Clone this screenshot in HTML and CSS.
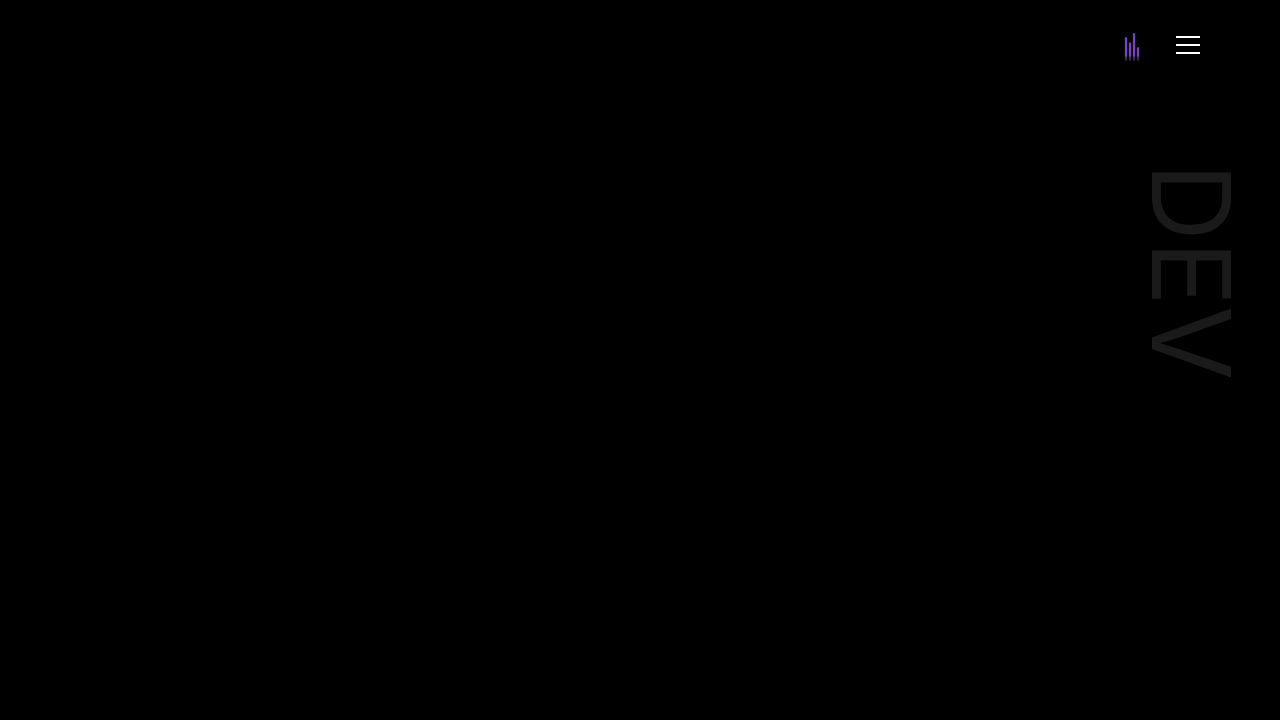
FILE: index.html
```html
<!DOCTYPE html>
<html lang="en">
<head>
<meta charset="utf-8">
<title>DEV</title>
<link rel="stylesheet" href="styles.css">
</head>
<body>
<div class="page">
  <header class="topbar">
    <svg class="equalizer" viewBox="0 0 16 28" width="16" height="28" aria-hidden="true">
      <defs>
        <linearGradient id="barfade" gradientUnits="userSpaceOnUse" x1="0" y1="0" x2="0" y2="28">
          <stop offset="0" stop-color="#7c3fd0"/>
          <stop offset="0.82" stop-color="#7c3fd0"/>
          <stop offset="0.86" stop-color="#3a3a44"/>
          <stop offset="1" stop-color="#26262c"/>
        </linearGradient>
      </defs>
      <rect x="0.9" y="4.3" width="2.2" height="23.4" fill="url(#barfade)"/>
      <rect x="4.9" y="9.6" width="2.2" height="18.1" fill="url(#barfade)"/>
      <rect x="8.9" y="0.3" width="2.2" height="27.4" fill="url(#barfade)"/>
      <rect x="12.9" y="14.3" width="2.2" height="13.4" fill="url(#barfade)"/>
    </svg>
    <button class="burger" aria-label="Menu">
      <span class="line"></span>
      <span class="line"></span>
      <span class="line"></span>
    </button>
  </header>
  <div class="side-word">DEV</div>
</div>
</body>
</html>
```

FILE: styles.css
```css
* { box-sizing: border-box; }
html, body { margin: 0; height: 100%; background: #000; overflow: hidden; }
.page { height: 720px; display: flex; flex-direction: column; align-items: flex-end; font-family: Inter, sans-serif; }
.topbar { display: flex; align-items: flex-start; gap: 36px; padding: 33px 80px 0 0; height: 163px; }
.equalizer { display: block; flex: none; }
.burger { display: flex; flex-direction: column; gap: 6px; width: 24px; margin: 3px 0 0; padding: 0; background: none; border: 0; }
.line { display: block; height: 2px; background: #fff; }
.side-word { writing-mode: vertical-rl; font-size: 108px; line-height: 110px; color: #1a1a1a; margin-right: 34px; white-space: nowrap; }
```
